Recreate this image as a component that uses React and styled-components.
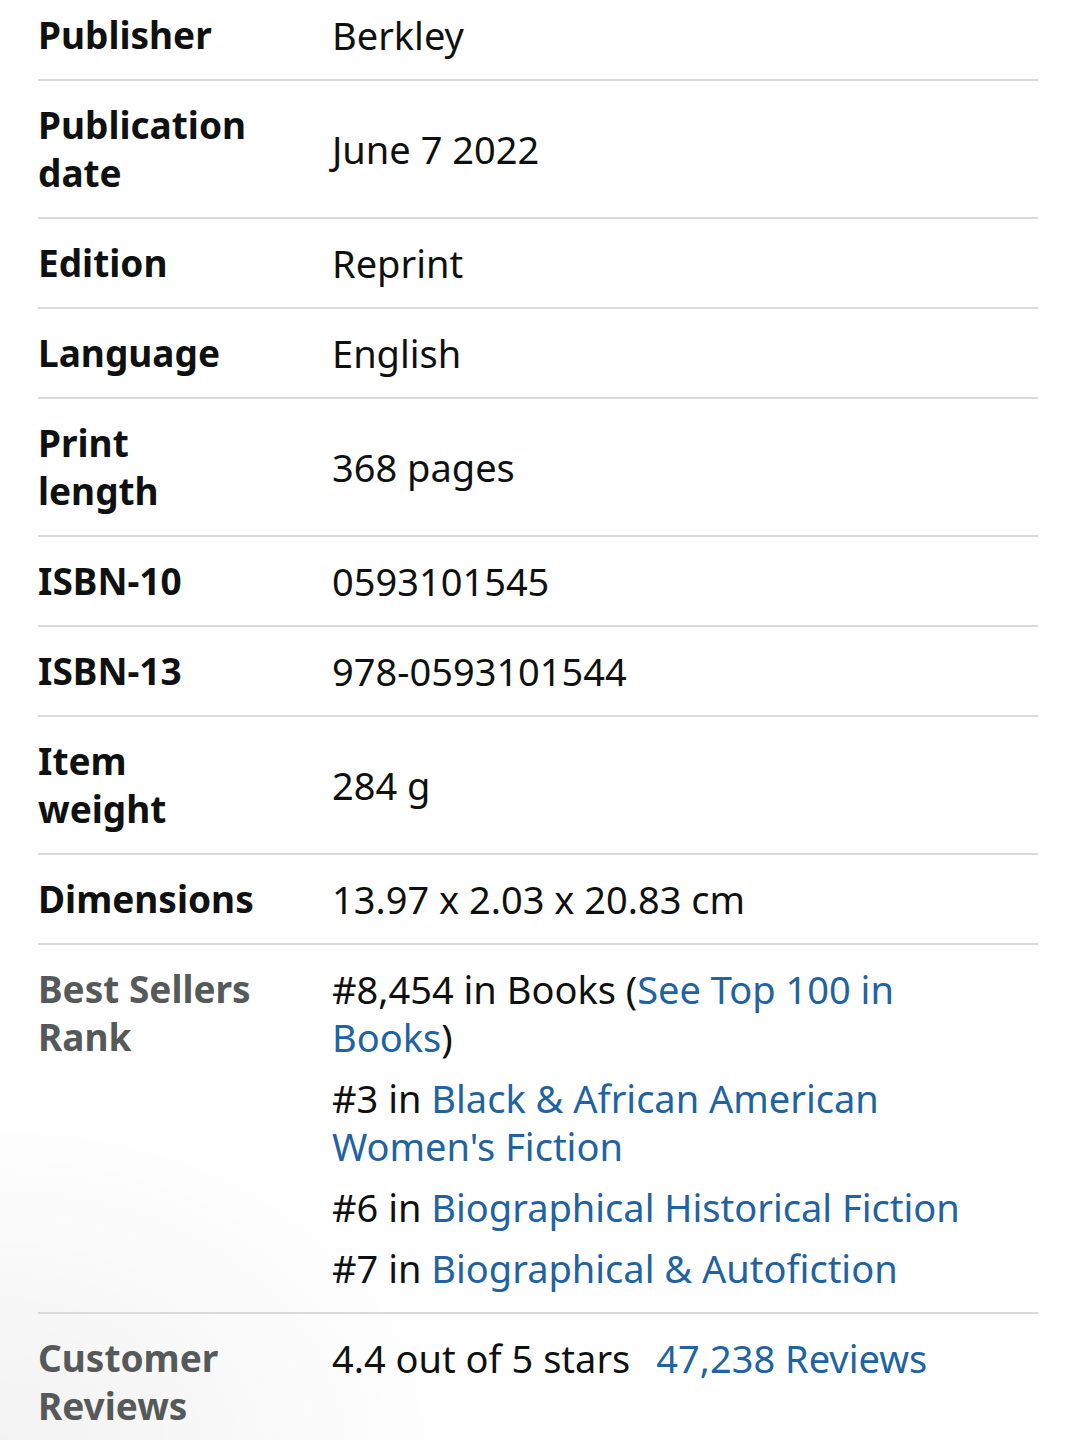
import React from 'react'
import styled, { createGlobalStyle } from 'styled-components'

const GlobalStyle = createGlobalStyle`
    html, body {
        margin: 0;
        padding: 0;
        background: #fff;
    }
    body {
        min-height: 1440px;
        overflow: hidden;
        font-family: "Noto Sans", "Open Sans", sans-serif;
        color: #0f1111;
        background: radial-gradient(ellipse 480px 360px at 0% 100%, rgba(0, 0, 0, 0.05), rgba(0, 0, 0, 0) 100%), #fff;
        background-repeat: no-repeat;
    }
`

const Table = styled.div`
    margin-top: -9px;
    padding: 0 37px 0 38px;
`

const Row = styled.div`
    display: grid;
    grid-template-columns: 294px 1fr;
    align-items: ${props => (props.top ? 'start' : 'center')};
    padding: 20px 0;
    border-bottom: ${props => (props.last ? 'none' : '2px solid #dadada')};
`

const Label = styled.div`
    font-size: 37px;
    line-height: 48px;
    font-weight: 700;
    color: ${props => (props.muted ? '#565959' : '#0f1111')};
`

const Value = styled.div`
    font-size: 38px;
    line-height: 48px;
    color: #0f1111;
    padding-right: 50px;
    display: flex;
    flex-direction: column;
    gap: 13px;
`

const Line = styled.div`
    display: flex;
    gap: ${props => props.gap || 0};
    flex-wrap: wrap;
`

const Link = styled.a`
    color: #2162a1;
    text-decoration: none;
`

const details = [
    ['Publisher', 'Berkley'],
    ['Publication date', 'June 7 2022'],
    ['Edition', 'Reprint'],
    ['Language', 'English'],
    ['Print length', '368 pages'],
    ['ISBN-10', '0593101545'],
    ['ISBN-13', '978-0593101544'],
    ['Item weight', '284 g'],
    ['Dimensions', '13.97 x 2.03 x 20.83 cm'],
]

const ranks = [
    ['#3 in ', 'Black & African American Women\'s Fiction'],
    ['#6 in ', 'Biographical Historical Fiction'],
    ['#7 in ', 'Biographical & Autofiction'],
]

const twoLine = {
    'Publication date': ['Publication', 'date'],
    'Print length': ['Print', 'length'],
    'Item weight': ['Item', 'weight'],
}

const App = () => {
    return (
        <>
            <GlobalStyle />
            <Table>
                {details.map(([label, value]) => (
                    <Row key={label}>
                        <Label>
                            {twoLine[label] ? <>{twoLine[label][0]}<br />{twoLine[label][1]}</> : label}
                        </Label>
                        <Value>{value}</Value>
                    </Row>
                ))}
                <Row top>
                    <Label muted>Best Sellers<br />Rank</Label>
                    <Value>
                        <div>#8,454 in Books (<Link href="#">See Top 100 in Books</Link>)</div>
                        {ranks.map(([pre, cat]) => (
                            <div key={cat}>{pre}<Link href="#">{cat}</Link></div>
                        ))}
                    </Value>
                </Row>
                <Row top last>
                    <Label muted>Customer<br />Reviews</Label>
                    <Value>
                        <Line gap="26px">
                            <span>4.4 out of 5 stars</span>
                            <Link href="#">47,238 Reviews</Link>
                        </Line>
                    </Value>
                </Row>
            </Table>
        </>
    )
}

export default App
